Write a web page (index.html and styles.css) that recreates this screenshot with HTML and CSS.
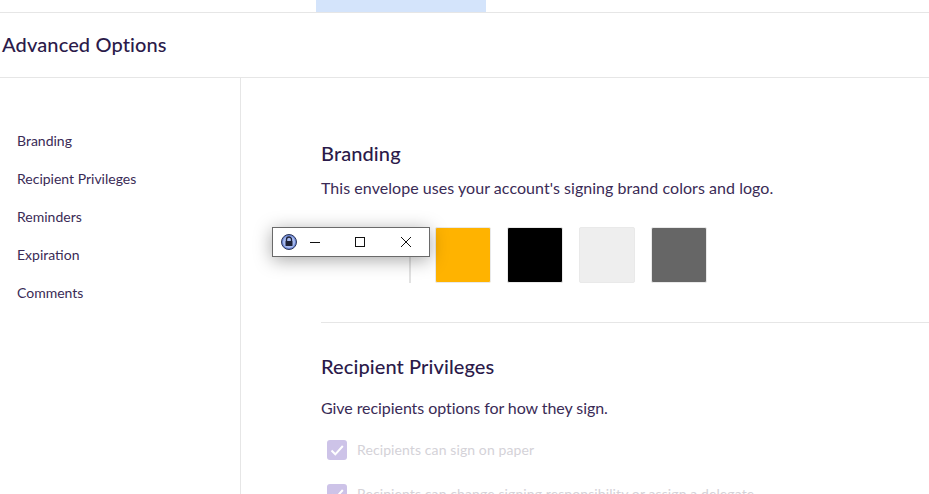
FILE: index.html
```html
<!DOCTYPE html>
<html lang="en">
<head>
<meta charset="utf-8">
<title>Advanced Options</title>
<link rel="stylesheet" href="styles.css">
</head>
<body>
<div class="topbar"><div class="tab"></div></div>
<header class="header"><h1>Advanced Options</h1></header>
<div class="body">
  <nav class="side">
    <a>Branding</a>
    <a>Recipient Privileges</a>
    <a>Reminders</a>
    <a>Expiration</a>
    <a>Comments</a>
  </nav>
  <main class="main">
    <section class="branding">
      <h2>Branding</h2>
      <p class="lead">This envelope uses your account's signing brand colors and logo.</p>
      <div class="swatches">
        <div class="divider"></div>
        <div class="swatch yellow"></div>
        <div class="swatch black"></div>
        <div class="swatch light"></div>
        <div class="swatch gray"></div>
      </div>
    </section>
    <section class="priv">
      <h2>Recipient Privileges</h2>
      <p class="lead">Give recipients options for how they sign.</p>
      <label class="check"><span class="box"><svg viewBox="0 0 20 20" width="20" height="20"><path d="M4.5 10.5l3.8 3.8 7.5-8.3" fill="none" stroke="#fff" stroke-width="2"/></svg></span>Recipients can sign on paper</label>
      <label class="check"><span class="box"><svg viewBox="0 0 20 20" width="20" height="20"><path d="M4.5 10.5l3.8 3.8 7.5-8.3" fill="none" stroke="#fff" stroke-width="2"/></svg></span>Recipients can change signing responsibility or assign a delegate</label>
    </section>
  </main>
</div>
<div class="win">
  <svg class="lock" viewBox="0 0 16 16" width="16" height="16">
    <circle cx="8" cy="8" r="7.5" fill="#6f8ad8" stroke="#2c3557"/>
    <circle cx="8" cy="8" r="6" fill="#a9bcf0"/>
    <path d="M5.5 7V5.5a2.5 2.5 0 0 1 5 0V7" fill="none" stroke="#1e2238" stroke-width="1.3"/>
    <rect x="4.5" y="7" width="7" height="5" rx=".5" fill="#1e2238"/>
  </svg>
  <svg class="ctl min" viewBox="0 0 12 12" width="12" height="12"><path d="M1 6.5h10" stroke="#111" fill="none"/></svg>
  <svg class="ctl max" viewBox="0 0 12 12" width="12" height="12"><rect x="1.5" y="1.5" width="9" height="9" stroke="#111" fill="none"/></svg>
  <svg class="ctl cls" viewBox="0 0 12 12" width="12" height="12"><path d="M1 1l10 10M11 1L1 11" stroke="#111" fill="none"/></svg>
</div>
</body>
</html>
```
FILE: styles.css
```css
* { box-sizing: border-box; }
html, body { margin: 0; height: 100%; overflow: hidden; }
body { background: #fff; color: #2b1a4a; font-family: "Lato", "Noto Sans", sans-serif; height: 494px; position: relative; }
.topbar { height: 13px; border-bottom: 1px solid #e6e6e6; padding-left: 316px; }
.tab { width: 170px; height: 12px; background: #d4e4fb; }
.header { height: 65px; border-bottom: 1px solid #e6e6e6; display: flex; align-items: center; padding-left: 2px; padding-bottom: 2px; }
h1 { margin: 0; font-size: 20px; font-weight: 500; line-height: 24px; letter-spacing: .13px; }
.body { display: flex; height: 416px; }
.side { width: 241px; flex: none; border-right: 1px solid #e6e6e6; padding: 53px 0 0 17px; display: flex; flex-direction: column; gap: 18px; }
.side a { font-size: 14px; line-height: 20px; color: #3a2b56; }
.main { flex: 1; padding: 61px 0 0 80px; min-width: 0; }
h2 { margin: 0; font-size: 20px; line-height: 28px; font-weight: 500; letter-spacing: .1px; }
.lead { margin: 0; font-size: 16px; line-height: 24px; letter-spacing: .05px; color: #3a2b56; }
.branding { border-bottom: 1px solid #e6e6e6; height: 184px; }
.branding .lead { margin-top: 9px; }
.swatches { display: flex; gap: 16px; margin-top: 27px; padding-left: 88px; }
.divider { width: 2px; height: 56px; background: #e2e2e2; margin-right: 8px; }
.swatch { width: 56px; height: 56px; border: 1px solid #e9e9e9; border-radius: 2px; }
.yellow { background: #ffb300; }
.black { background: #000; }
.light { background: #eee; }
.gray { background: #666; }
.priv { padding-top: 29px; }
.priv .lead { margin-top: 16px; margin-bottom: 20px; letter-spacing: -.07px; }
.check { display: flex; align-items: center; gap: 10px; font-size: 14px; line-height: 20px; color: #d4d2d8; margin: 0 0 24px 6px; height: 20px; letter-spacing: .1px; }
.box { width: 20px; height: 20px; border-radius: 3px; background: #cdc3e8; display: block; flex: none; }
.box svg { display: block; }
.win { position: absolute; left: 272px; top: 227px; width: 158px; height: 30px; background: #fff; border: 1px solid #6a6a6a; box-shadow: 0 3px 18px rgba(0,0,0,.35); }
.lock { position: absolute; left: 8px; top: 6px; }
.ctl { position: absolute; top: 8px; }
.min { left: 36px; }
.max { left: 81px; }
.cls { left: 127px; }
```
